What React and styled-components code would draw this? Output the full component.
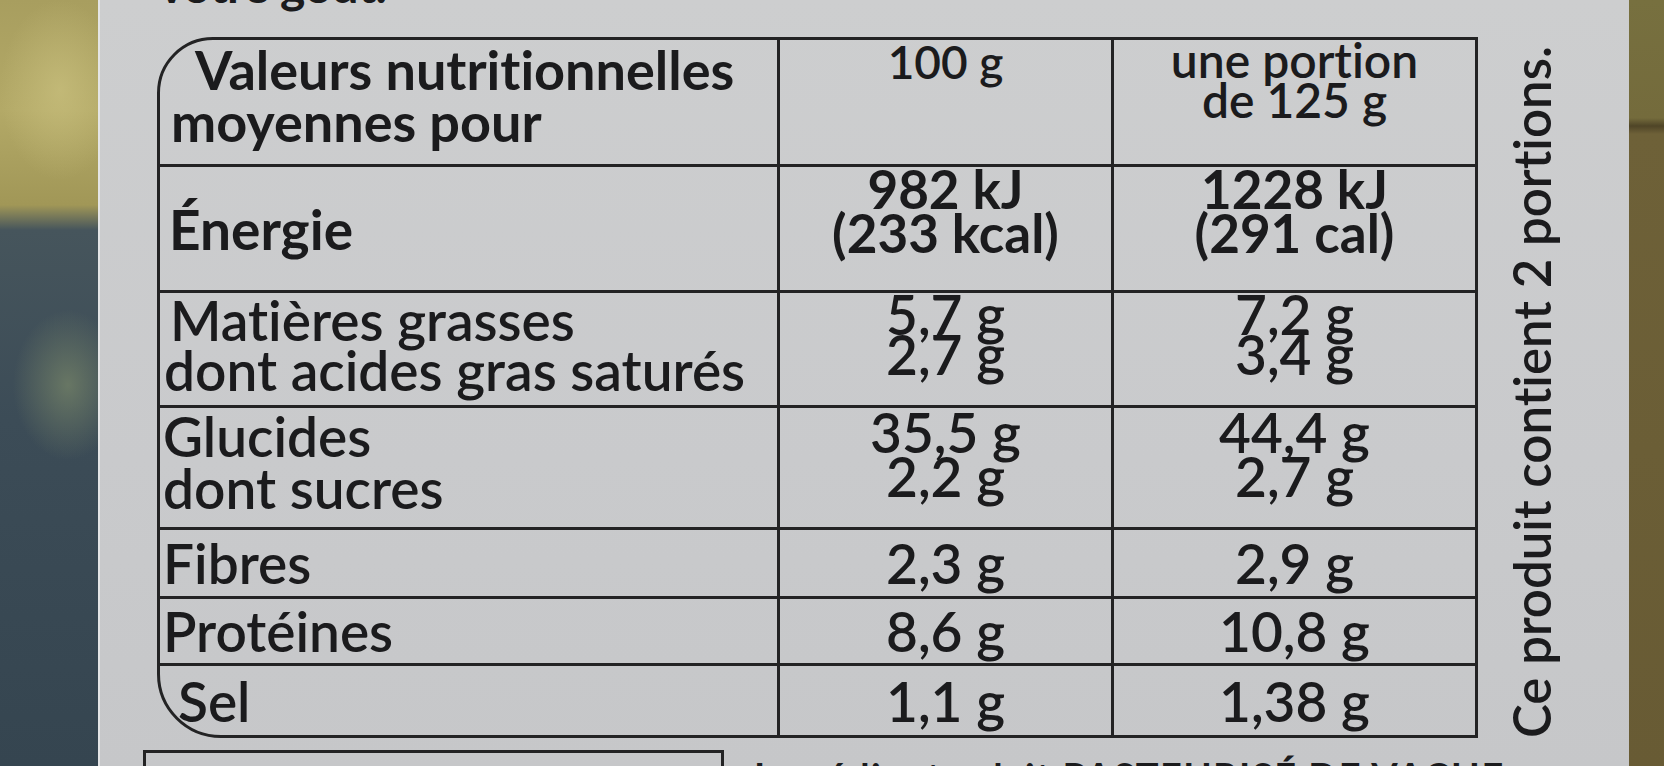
import React from 'react';
import styled, { createGlobalStyle } from 'styled-components';

const GlobalStyle = createGlobalStyle`
  html, body {
    margin: 0;
    padding: 0;
    width: 1664px;
    height: 766px;
    overflow: hidden;
    background: #6a5d36;
  }
  #root {
    height: 766px;
  }
`;

const Page = styled.div`
  display: flex;
  width: 1664px;
  height: 766px;
  overflow: hidden;
  font-family: Lato, "Liberation Sans", sans-serif;
  font-variant-ligatures: none;
  color: #1b1b1d;
`;

const LeftStrip = styled.div`
  width: 98px;
  flex-shrink: 0;
  background:
    radial-gradient(ellipse 55px 75px at 68px 385px, rgba(118, 132, 104, 0.75), rgba(118, 132, 104, 0) 100%),
    radial-gradient(ellipse 60px 90px at 60px 90px, rgba(205, 196, 130, 0.6), rgba(205, 196, 130, 0) 100%),
    linear-gradient(180deg, #a89e5f 0px, #b3a967 110px, #a19757 205px, #46555c 230px, #3c4c57 420px, #354550 766px);
`;

const Paper = styled.div`
  flex: 1;
  display: flex;
  flex-direction: column;
  padding-left: 57px;
  border-left: 2px solid #e4e5e6;
  background: linear-gradient(180deg, #cdcecf 0%, #c9cacc 60%, #c6c7c9 100%);
  overflow: hidden;
`;

const RightStrip = styled.div`
  width: 35px;
  flex-shrink: 0;
  background: linear-gradient(180deg, #77703f 0px, #746b3c 118px, #4f4527 126px, #6e6138 134px, #685b34 766px);
`;

const IntroBox = styled.div`
  height: 37px;
  flex-shrink: 0;
  overflow: hidden;
`;

const Intro = styled.p`
  margin: -39px 0 0 2px;
  font-size: 48px;
  line-height: 48px;
  font-weight: 700;
  letter-spacing: -0.5px;
`;

const Body = styled.div`
  display: flex;
  align-items: stretch;
`;

const Table = styled.div`
  flex-shrink: 0;
  display: grid;
  grid-template-columns: 620px 334px 361px;
  grid-template-rows: 127px 126px 115px 122px 69px 67px 69px;
  border: 3px solid #232324;
  border-radius: 56px 0 0 64px;
  overflow: hidden;
`;

const Cell = styled.div`
  display: flex;
  flex-direction: column;
  justify-content: ${(p) => (p.$middle ? 'center' : 'flex-start')};
  align-items: ${(p) => (p.$label ? 'flex-start' : 'center')};
  padding: ${(p) => p.$pad || '0'};
  border-right: ${(p) => (p.$lastCol ? 'none' : '3px solid #232324')};
  border-bottom: ${(p) => (p.$lastRow ? 'none' : '3px solid #232324')};
  font-size: ${(p) => p.$size || 55}px;
  font-weight: ${(p) => (p.$bold ? 700 : 600)};
  line-height: ${(p) => p.$lh || 50}px;
  white-space: nowrap;
`;

const Line = styled.span`
  display: block;
  padding-left: ${(p) => p.$indent || 0}px;
`;

const Note = styled.div`
  width: 151px;
  flex-shrink: 0;
  display: flex;
  align-items: flex-end;
  padding-left: 25px;
`;

const NoteText = styled.span`
  writing-mode: vertical-rl;
  transform: rotate(180deg);
  font-size: 51px;
  line-height: 58px;
  font-weight: 600;
  white-space: nowrap;
`;

const Bottom = styled.div`
  display: flex;
  align-items: flex-start;
  gap: 30px;
  margin-top: 12px;
  margin-left: -14px;
`;

const Frame = styled.div`
  width: 575px;
  height: 40px;
  flex-shrink: 0;
  border: 3px solid #232324;
  border-bottom: none;
`;

const Fine = styled.span`
  font-size: 38px;
  font-weight: 700;
  line-height: 40px;
  margin-top: 6px;
  letter-spacing: 1.5px;
  white-space: nowrap;
`;

const rows = [
  {
    label: ['Valeurs nutritionnelles', 'moyennes pour'],
    a: ['100 g'],
    b: ['une portion', 'de 125 g'],
    labelBold: true,
    labelSize: 54,
    labelPad: '4px 0 0 11px',
    indent: 24,
    lh: 52,
    aPad: '2px 0 0 0',
    aSize: 46,
    bPad: '0',
    bSize: 48,
    vlh: 40,
  },
  {
    label: ['Énergie'],
    a: ['982 kJ', '(233 kcal)'],
    b: ['1228 kJ', '(291 cal)'],
    labelBold: true,
    valueBold: true,
    labelMiddle: true,
    labelPad: '0 0 0 9px',
    aPad: '0',
    bPad: '0',
    aSize: 53,
    bSize: 53,
    lh: 50,
    vlh: 44,
  },
  {
    label: ['Matières grasses', 'dont acides gras saturés'],
    a: ['5,7 g', '2,7 g'],
    b: ['7,2 g', '3,4 g'],
    labelPad: '2px 0 0 4px',
    indent: 6,
    aPad: '1px 0 0 0',
    bPad: '1px 0 0 0',
    lh: 50,
    vlh: 40,
  },
  {
    label: ['Glucides', 'dont sucres'],
    a: ['35,5 g', '2,2 g'],
    b: ['44,4 g', '2,7 g'],
    labelPad: '2px 0 0 3px',
    aPad: '2px 0 0 0',
    bPad: '2px 0 0 0',
    lh: 52,
    vlh: 44,
  },
  { label: ['Fibres'], a: ['2,3 g'], b: ['2,9 g'], labelMiddle: true, valueMiddle: true, labelPad: '0 0 0 3px', lh: 50, vlh: 50 },
  { label: ['Protéines'], a: ['8,6 g'], b: ['10,8 g'], labelMiddle: true, valueMiddle: true, labelPad: '0 0 0 3px', lh: 50, vlh: 50 },
  { label: ['Sel'], a: ['1,1 g'], b: ['1,38 g'], labelMiddle: true, valueMiddle: true, labelPad: '0 0 0 18px', lh: 50, vlh: 50 },
];

const App = () => {
  return (
    <Page>
      <GlobalStyle />
      <LeftStrip />
      <Paper>
        <IntroBox>
          <Intro>votre goût.</Intro>
        </IntroBox>
        <Body>
          <Table>
            {rows.map((r, i) => {
              const lastRow = i === rows.length - 1;
              return (
                <React.Fragment key={i}>
                  <Cell
                    $label
                    $bold={r.labelBold}
                    $middle={r.labelMiddle}
                    $pad={r.labelPad}
                    $size={r.labelSize}
                    $lh={r.lh}
                    $lastRow={lastRow}
                  >
                    {r.label.map((t, j) => (
                      <Line key={j} $indent={j === 0 ? r.indent : 0}>{t}</Line>
                    ))}
                  </Cell>
                  <Cell
                    $bold={r.valueBold}
                    $middle={r.valueMiddle}
                    $pad={r.aPad}
                    $size={r.aSize}
                    $lh={r.vlh}
                    $lastRow={lastRow}
                  >
                    {r.a.map((t, j) => (
                      <Line key={j}>{t}</Line>
                    ))}
                  </Cell>
                  <Cell
                    $bold={r.valueBold}
                    $middle={r.valueMiddle}
                    $pad={r.bPad}
                    $size={r.bSize}
                    $lh={r.vlh}
                    $lastRow={lastRow}
                    $lastCol
                  >
                    {r.b.map((t, j) => (
                      <Line key={j}>{t}</Line>
                    ))}
                  </Cell>
                </React.Fragment>
              );
            })}
          </Table>
          <Note>
            <NoteText>Ce produit contient 2 portions.</NoteText>
          </Note>
        </Body>
        <Bottom>
          <Frame />
          <Fine>Ingrédients : lait PASTEURISÉ DE VACHE</Fine>
        </Bottom>
      </Paper>
      <RightStrip />
    </Page>
  );
};

export default App;
